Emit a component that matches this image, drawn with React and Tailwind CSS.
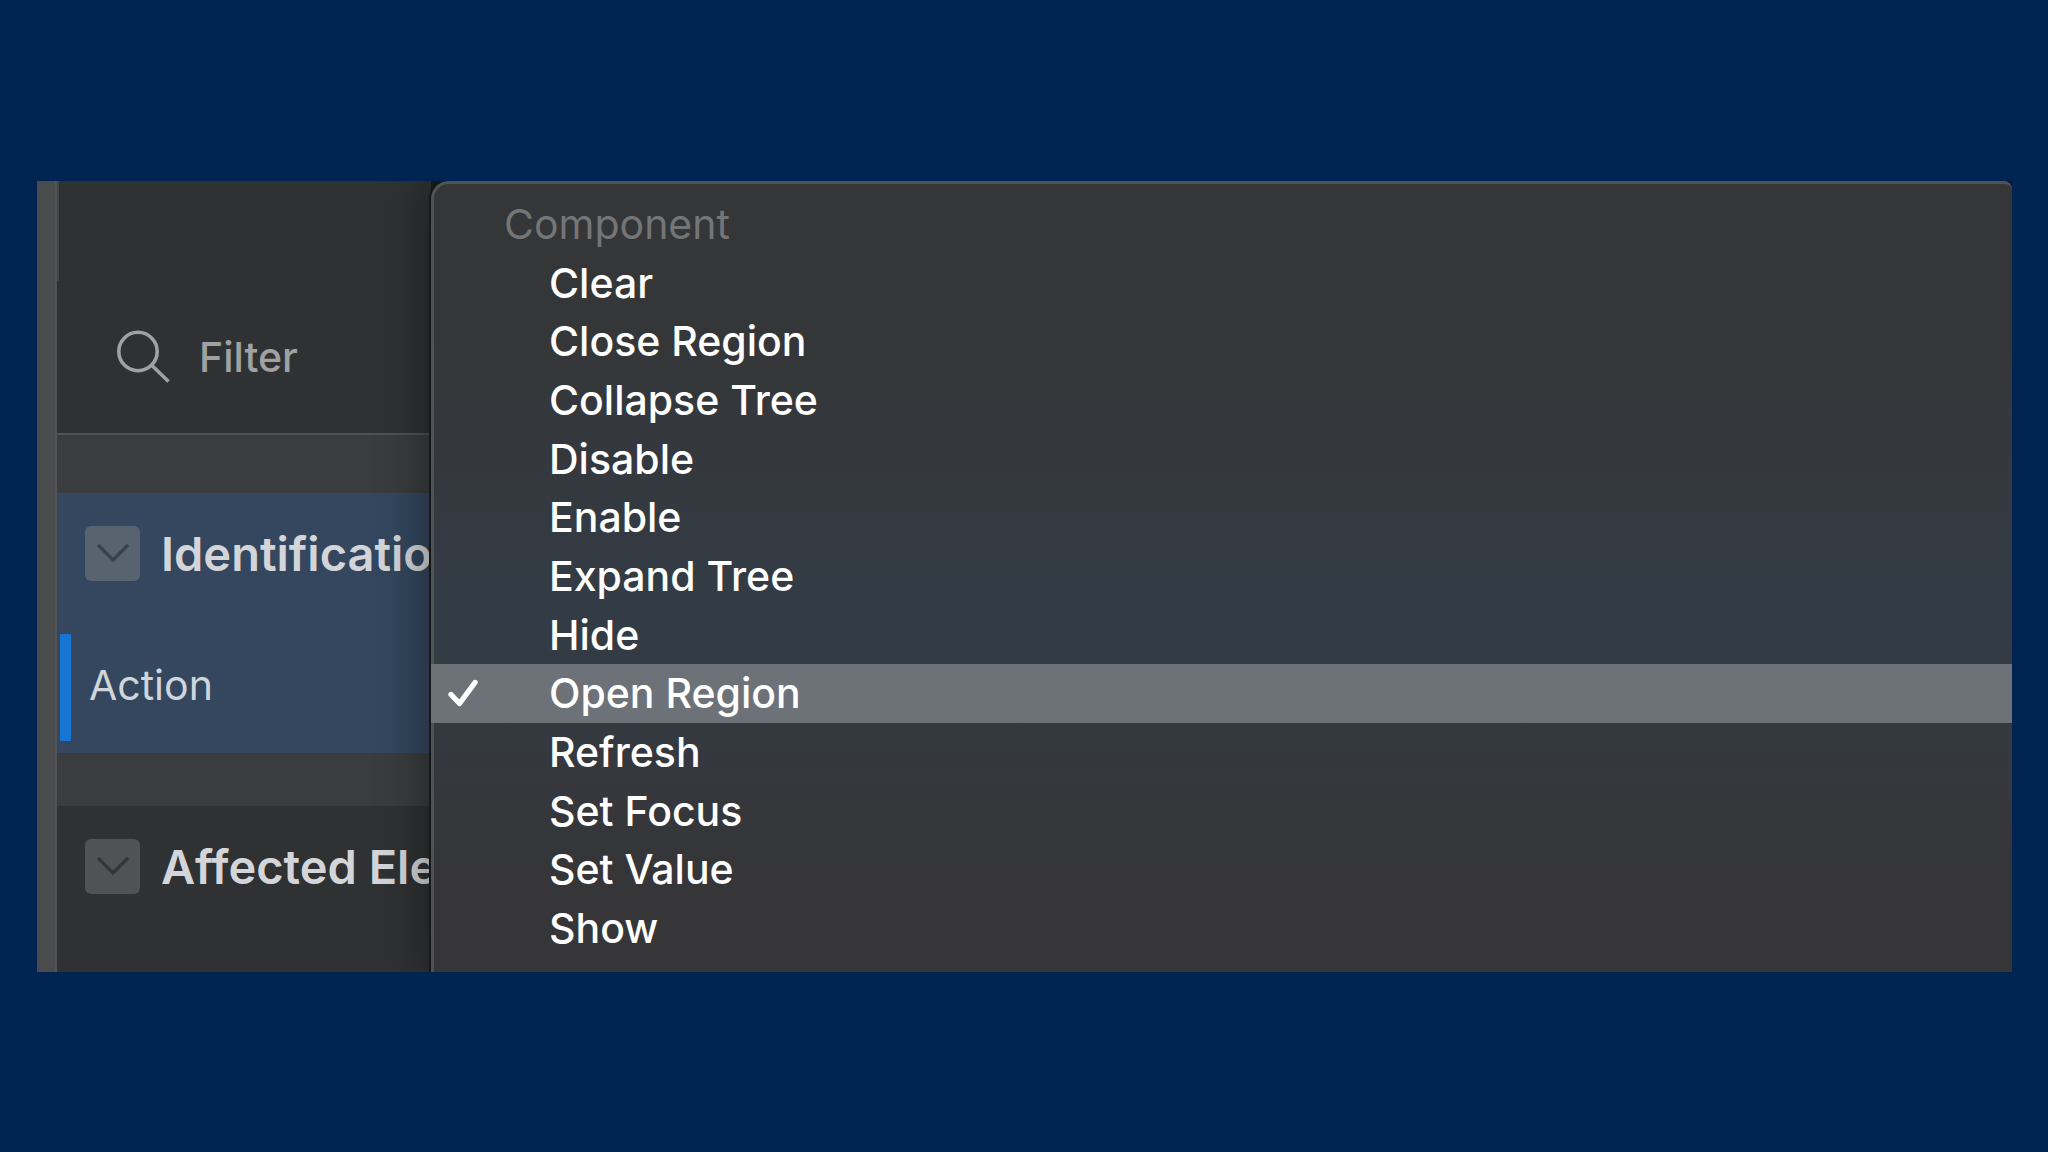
import { useState } from 'react';

const ACTIONS = [
  'Clear',
  'Close Region',
  'Collapse Tree',
  'Disable',
  'Enable',
  'Expand Tree',
  'Hide',
  'Open Region',
  'Refresh',
  'Set Focus',
  'Set Value',
  'Show',
];

const SearchIcon = () => (
  <svg className="w-[54px] h-[54px] shrink-0" viewBox="0 0 54 54" fill="none" stroke="currentColor" strokeWidth="3.6" aria-hidden="true">
    <circle cx="21" cy="21.5" r="19.2" />
    <path d="M35 35.5 51.5 51.5" />
  </svg>
);

const CheckIcon = () => (
  <svg className="w-8 h-8" viewBox="0 0 32 32" fill="none" stroke="currentColor" strokeWidth="5.4" strokeLinecap="round" strokeLinejoin="round" aria-hidden="true">
    <path d="M4 17.5 12.5 26.5 28 5.5" />
  </svg>
);

const SectionHeader = ({ title, toggleClass }) => (
  <div className="flex items-center gap-[21px] pt-[33px] pb-[35px] pl-7">
    <button
      type="button"
      aria-label={`Toggle ${title}`}
      className={`flex size-[55px] shrink-0 items-center justify-center rounded-md ${toggleClass}`}
    >
      <svg className="w-8 h-5" viewBox="0 0 32 20" fill="none" stroke="currentColor" strokeWidth="3.2" aria-hidden="true">
        <path d="M1 2 16 17 31 2" />
      </svg>
    </button>
    <h2 className="text-[47px] leading-[55px] font-semibold whitespace-nowrap text-[#d3d5d8]">{title}</h2>
  </div>
);

/** Property editor column, left of the menu */
const Sidebar = () => (
  <aside className="flex w-[374px] shrink-0 flex-col overflow-hidden bg-[#3b3c3d]">
    <div className="border-b-2 border-[#505152] bg-[#2f3133]">
      <div className="h-[100px] border-l-2 border-[#434546]" />
      <label className="flex h-[152px] items-center gap-7 pl-[60px] text-[#a0a1a2]">
        <SearchIcon />
        <input
          type="text"
          aria-label="Filter"
          placeholder="Filter"
          className="min-w-0 flex-1 bg-transparent text-[41px] leading-[52px] font-medium outline-none placeholder:text-[#a0a1a2]"
        />
      </label>
    </div>

    <section className="mt-[58px] bg-[#34475e] pb-3">
      <SectionHeader title="Identification" toggleClass="bg-[#57636f] text-[#36424f]" />
      <div className="mt-[18px] ml-[3px] flex h-[107px] items-center border-l-[11px] border-[#1676d2] pb-1 pl-[18px] text-[41px] leading-[52px] text-[#d0d5dc]">
        Action
      </div>
    </section>

    <section className="mt-[53px] flex-1 bg-[#2f3133]">
      <SectionHeader title="Affected Elements" toggleClass="bg-[#515254] text-[#333537]" />
    </section>
  </aside>
);

const ActionMenu = ({ selected, onSelect }) => (
  <div
    role="menu"
    aria-label="Action"
    className="z-10 flex min-w-0 flex-1 flex-col rounded-t-[18px] rounded-tr-lg border-t-3 border-l-3 border-[#505354] bg-linear-to-b from-[#353638] from-20% via-[#333c46] via-55% to-[#363537] to-90% pt-[11px] pb-[14px] shadow-[0_0_0_2px_#151718,0_0_50px_6px_rgba(0,0,0,0.4)]"
  >
    <div className="flex flex-1 items-center pl-[70px] text-[41px] leading-[52px] text-[#747577]">Component</div>
    {ACTIONS.map((action) => {
      const isSelected = action === selected;
      return (
        <button
          key={action}
          type="button"
          role="menuitemradio"
          aria-checked={isSelected}
          onClick={() => onSelect(action)}
          className={`-ml-[3px] flex flex-1 items-center pl-4 text-left text-[41px] leading-[52px] font-medium text-white ${
            isSelected ? 'bg-[#6c7278]' : ''
          }`}
        >
          <span className="w-[102px]">{isSelected && <CheckIcon />}</span>
          {action}
        </button>
      );
    })}
  </div>
);

export default function App() {
  const [selected, setSelected] = useState('Open Region');

  return (
    <main className="flex min-h-screen items-center bg-[#002451] pr-9 pl-[37px] font-['Inter',sans-serif]">
      <div className="flex min-h-[791px] flex-1 overflow-hidden bg-[#1b1d1e]">
        <div className="w-5 shrink-0 border-r-2 border-[#525354] bg-[#4a4b4c]" />
        <Sidebar />
        <ActionMenu selected={selected} onSelect={setSelected} />
      </div>
    </main>
  );
}
